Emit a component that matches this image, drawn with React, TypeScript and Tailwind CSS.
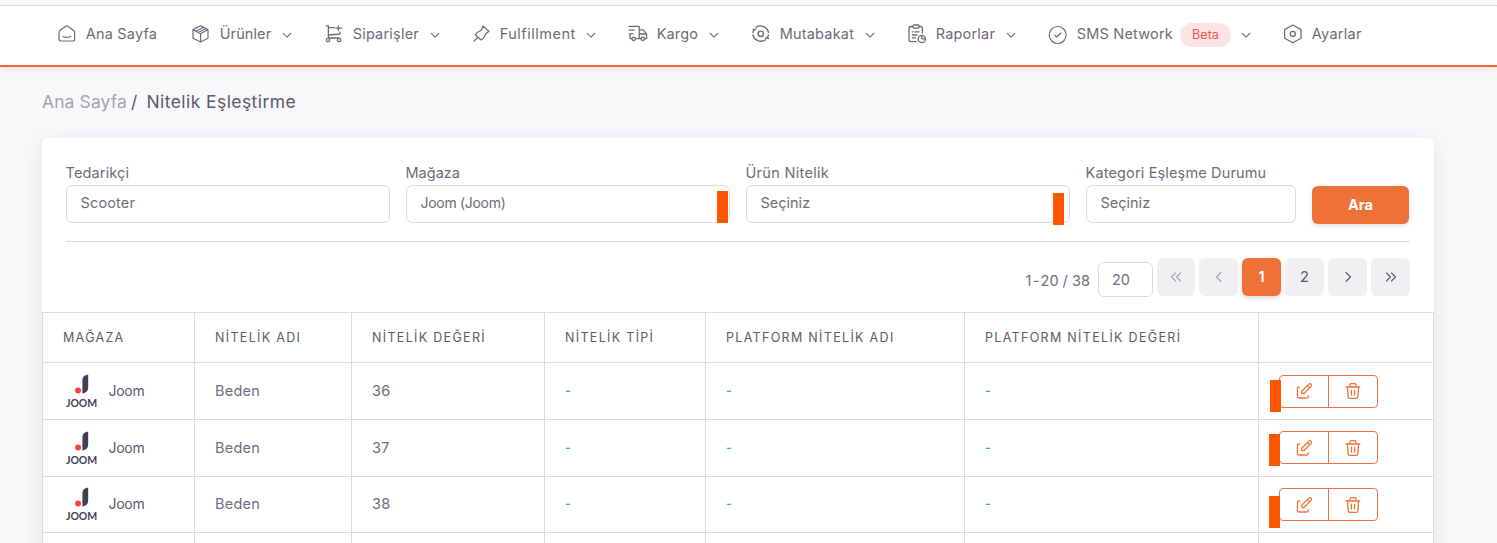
import React from "react";

type IconProps = { className?: string };

const Svg = ({ children, className = "", sw = 1.5 }: { children: React.ReactNode; className?: string; sw?: number }) => (
  <svg viewBox="0 0 20 20" className={`h-5 w-5 shrink-0 ${className}`} fill="none" stroke="currentColor" strokeWidth={sw} strokeLinecap="round" strokeLinejoin="round">
    {children}
  </svg>
);

const HomeIcon = () => (
  <Svg sw={1.2}>
    <path d="M2 8.2 C2 7.4 2.3 6.8 2.9 6.4 L8.5 2.4 C9.3 1.8 10.3 1.8 11.1 2.4 L16.7 6.4 C17.3 6.8 17.6 7.4 17.6 8.2 V15 C17.6 16.3 16.8 17 15.6 17 H4 C2.8 17 2 16.3 2 15 Z" />
    <path d="M6 12.4 C8 13.8 11.6 13.8 13.6 12.4" />
  </Svg>
);
const BoxIcon = () => (
  <Svg sw={1.2}>
    <path d="M9.6 1.8 L17 5.6 V14.2 L9.6 18 L2 14.2 V5.6 Z M2 5.6 L9.6 9.8 L17 5.6 M9.6 9.8 V18 M5 7.2 L12.4 3.2 M7.4 8.6 L14.8 4.5" />
  </Svg>
);
const CartIcon = () => (
  <Svg sw={1.3}>
    <path d="M2 1.8 H4.4 V14 M4.4 3.6 H10.4 M4.4 11 L16 10 V8.2 M14.4 1.8 V6.6 M12 4.2 H17.8 M4.4 14 H15" />
    <circle cx="4" cy="16" r="1.7" />
    <circle cx="15.2" cy="16" r="1.7" />
  </Svg>
);
const PinIcon = () => (
  <Svg sw={1.2}>
    <path d="M12 2 L18 7.2 L15 9.5 L12.8 13.8 L10 16 L4.3 10.8 L6.5 8.2 L10.4 6.2 Z M7 13.3 L3 17" />
  </Svg>
);
const TruckIcon = () => (
  <Svg sw={1.3}>
    <path d="M1 2.4 H11.2 V14.6 H8 M11.2 5.8 H15.2 L18.6 9.8 V14.6 H16.8 M11.2 10 H18.4 M1.2 6.2 H6 M1.2 9.8 H5 M2 9.8 V14.6 H3.4 M8 14.6 H13" />
    <circle cx="5.6" cy="14.8" r="1.7" />
    <circle cx="14.8" cy="14.8" r="1.7" />
  </Svg>
);
const SyncIcon = () => (
  <Svg sw={1.4}>
    <path d="M5.3 3.2 A8 8 0 0 1 17.4 8.2 M14.1 16 A8 8 0 0 1 2 11 M2 8.5 A8 8 0 0 1 3 6 M17.4 11.2 A8 8 0 0 1 16.2 13.8 M2.2 5.4 L3.4 6.1 L4.6 5 M17.4 14.4 L16 13.6 L14.8 14.8" />
    <circle cx="9.8" cy="9.8" r="2.7" />
  </Svg>
);
const ReportIcon = () => (
  <Svg sw={1.3}>
    <path d="M6 2.5 H4 Q2 2.5 2 4.5 V15.5 Q2 17.6 4 17.6 H9 M12 2.5 H13.5 Q15.4 2.5 15.4 4.5 V9 M6 2.2 Q6 1 7.2 1 H11 Q12.2 1 12.2 2.2 Q12.2 4.2 10.4 4.2 H7.8 Q6 4.2 6 2.2 M5.2 7.8 H6 M8 7.8 H12 M5.2 11 H10 M5.2 13.8 H8.6" />
    <circle cx="14.8" cy="14.9" r="3.6" />
    <path d="M14.8 11.5 V14.9 H18.2" />
  </Svg>
);
const CheckIcon = () => (
  <Svg sw={1.2} className="relative top-px">
    <circle cx="9.7" cy="10" r="8.5" />
    <path d="M6.8 10.2 L8.8 12 L12.8 8" />
  </Svg>
);
const HexIcon = () => (
  <Svg sw={1.3}>
    <path d="M9.8 1 L18 5.6 V14.2 L9.8 18.8 L1.6 14.2 V5.6 Z" />
    <circle cx="9.8" cy="9.9" r="2.5" />
  </Svg>
);
const Chevron = ({ className = "" }: IconProps) => (
  <svg viewBox="0 0 10 7" className={`h-[7px] w-[10px] shrink-0 ${className}`} fill="none" stroke="currentColor" strokeWidth="1.15" strokeLinecap="round" strokeLinejoin="round">
    <path d="M1.2 1.4 L5 5.2 L8.8 1.4" />
  </svg>
);

const nav = [
  { icon: <HomeIcon />, label: "Ana Sayfa", w: "w-[134px]", t: "w-[72px] tracking-[0.2px]" },
  { icon: <BoxIcon />, label: "Ürünler", w: "w-[133px]", t: "w-[52px] tracking-[0.1px]", menu: true },
  { icon: <CartIcon />, label: "Siparişler", w: "w-[147px]", t: "w-[67px] tracking-[0.2px]", menu: true },
  { icon: <PinIcon />, label: "Fulfillment", w: "w-[157px]", t: "w-[76px] tracking-[0.5px]", menu: true },
  { icon: <TruckIcon />, label: "Kargo", w: "w-[123px]", t: "w-[42px] tracking-[0.15px]", menu: true },
  { icon: <SyncIcon />, label: "Mutabakat", w: "w-[156px]", t: "w-[75px] tracking-[0.2px]", menu: true },
  { icon: <ReportIcon />, label: "Raporlar", w: "w-[141px]", t: "w-[60px] tracking-[0.2px]", menu: true },
  { icon: <CheckIcon />, label: "SMS Network", w: "w-[235px]", t: "w-[96px] tracking-[0.2px]", menu: true, badge: "Beta" },
  { icon: <HexIcon />, label: "Ayarlar", w: "w-[90px]", t: "w-[51px] tracking-[0.3px]" },
];

const NavBar = () => (
  <header className="mt-[5px] flex h-[62px] border-t border-b-2 border-t-[#dbdade] border-b-[#e9692c] bg-white pl-[57px] pb-[3px] shadow-[0_2px_6px_rgba(75,70,92,0.12)]">
    {nav.map((n) => (
      <a key={n.label} className={`flex shrink-0 items-center whitespace-nowrap ${n.w}`}>
        {n.icon}
        <span className={`ml-[8.7px] mr-[0.3px] shrink-0 ${n.t}`}>{n.label}</span>
        {n.badge && <span className="relative top-px ml-[7px] flex h-6 w-[51px] items-center justify-center rounded-full bg-[#fce4e4] text-[12.5px] tracking-[0.05px] text-[#ea5455]">{n.badge}</span>}
        {n.menu && <Chevron className="relative top-px ml-[10.5px]" />}
      </a>
    ))}
  </header>
);

const Marker = ({ className }: { className: string }) => <span className={`absolute h-8 w-[11px] bg-[#ff5500] ${className}`} />;

const Field = ({ label, value, w, marker, labelTrack = "", valueTrack = "" }: { label: string; value: string; w: string; marker?: string; labelTrack?: string; valueTrack?: string }) => (
  <div className={w}>
    <label className={`-ml-[0.5px] block h-[22px] whitespace-nowrap leading-[20px] ${labelTrack}`}>{label}</label>
    <div className="relative h-[38px] rounded-md border border-[#dbdade] pl-[13.5px] leading-[34px]">
      <span className={valueTrack}>{value}</span>
      {marker && <Marker className={marker} />}
    </div>
  </div>
);

const PageButton = ({ children, tone = "text-[#5d596c]" }: { children: React.ReactNode; tone?: string }) => (
  <span className={`flex h-[38px] w-[39px] items-center justify-center rounded-md bg-[#f0f0f2] ${tone}`}>{children}</span>
);
const Arrows = ({ d }: { d: string }) => (
  <svg viewBox="0 0 14 14" className="h-3.5 w-3.5" fill="none" stroke="currentColor" strokeWidth="1.15" strokeLinecap="round" strokeLinejoin="round">
    <path d={d} />
  </svg>
);

const JoomLogo = () => (
  <div className="-ml-[0.5px] flex w-[38px] flex-col items-center">
    <svg viewBox="0 0 16 20" className="h-5 w-4">
      <path d="M8.4 6.4 Q8.4 1.4 14.2 0.6 V13 Q14.2 18.8 8.4 19.4 Z" fill="#3f3f58" />
      <circle cx="4.1" cy="16.4" r="3" fill="#fb4343" />
    </svg>
    <span className="mt-1 -mb-px font-['Lato'] text-[10.5px] leading-[11px] font-bold tracking-[-0.1px] text-[#3f3f58]">JOOM</span>
  </div>
);

const EditIcon = () => (
  <svg viewBox="0 0 18 18" className="h-[18px] w-[18px]" fill="none" stroke="currentColor" strokeWidth="1.3" strokeLinecap="round" strokeLinejoin="round">
    <path d="M4.6 5 H3.8 Q2.4 5 2.4 6.4 V14.6 Q2.4 16 3.8 16 H11.8 Q13.2 16 13.2 14.6 V13.6" />
    <path d="M6.7 9.2 L13.8 2.1 Q15 1.2 16 2.2 Q17 3.3 16.1 4.4 L9 11.5 H6.7 Z M12.4 3.6 L14.6 5.8" />
  </svg>
);
const TrashIcon = () => (
  <svg viewBox="0 0 18 18" className="h-[18px] w-[18px]" fill="none" stroke="currentColor" strokeWidth="1.3" strokeLinecap="round" strokeLinejoin="round">
    <path d="M2.2 5 H15.8 M3.4 5 L4.2 15 Q4.3 16.4 5.6 16.4 H12.4 Q13.7 16.4 13.8 15 L14.6 5 M6 5 V2.8 Q6 1.6 7.2 1.6 H10.8 Q12 1.6 12 2.8 V5 M7.4 8.4 V13 M10.6 8.4 V13" />
  </svg>
);

const cols = "grid grid-cols-[152px_157px_193px_161px_259px_294px_175px] border-t border-[#dbdade]";
const cell = "flex items-center border-l border-[#dbdade] pl-5 whitespace-nowrap";

const heads = ["MAĞAZA", "NİTELİK ADI", "NİTELİK DEĞERİ", "NİTELİK TİPİ", "PLATFORM NİTELİK ADI", "PLATFORM NİTELİK DEĞERİ", ""];
const rows = [
  { size: "36", h: "h-[57px]", pad: "", marker: "left-[-10px] top-[4px]", nudge: "" },
  { size: "37", h: "h-[57px]", pad: "", marker: "left-[-11px] top-[2px]", nudge: "-mt-px" },
  { size: "38", h: "h-[56px]", pad: "pb-px", marker: "left-[-11px] top-[7px]", nudge: "" },
];

const Table = () => (
  <div className="border-r border-[#dbdade]">
    <div className={`${cols} h-[50px] text-[12.5px] tracking-[1.32px] text-[#5d596c]`}>
      {heads.map((h, i) => (
        <div key={i} className={`${cell} pt-px`}>{h}</div>
      ))}
    </div>
    {rows.map((r) => (
      <div key={r.size} className={`${cols} ${r.h}`}>
        <div className={`${cell} ${r.pad} text-[#5d596c]`}>
          <JoomLogo />
          <span className="ml-2 pb-px text-[14px] tracking-[-0.3px]">Joom</span>
        </div>
        <div className={`${cell} ${r.pad} tracking-[0.25px]`}>Beden</div>
        <div className={`${cell} ${r.pad} tracking-[0.2px]`}>{r.size}</div>
        {[0, 1, 2].map((i) => (
          <div key={i} className={`${cell} ${r.pad} text-[12.5px] font-semibold text-[#28c76f]`}>-</div>
        ))}
        <div className={cell}>
          <div className={`relative flex h-[33px] w-[99px] rounded-[4px] border border-[#ee7237] text-[#ee7237] ${r.nudge}`}>
            <span className="flex w-[49px] items-center justify-center border-r border-[#ee7237]"><EditIcon /></span>
            <span className="flex flex-1 items-center justify-center"><TrashIcon /></span>
            <Marker className={r.marker} />
          </div>
        </div>
      </div>
    ))}
    <div className={`${cols} h-[57px]`}>
      {heads.map((_, i) => (
        <div key={i} className={cell} />
      ))}
    </div>
  </div>
);

export default function App() {
  return (
    <div className="flex h-[543px] w-[1497px] flex-col overflow-hidden bg-[#f8f7fa] font-['Inter',sans-serif] text-[14.5px] text-[#6f6b7d]">
      <div className="shrink-0 bg-white"><NavBar /></div>
      <div className="mt-[23px] ml-[42px] flex h-6 shrink-0 items-center text-[17.5px] whitespace-nowrap">
        <span className="w-[89px] tracking-[0.1px] text-[#a5a3ae]">Ana Sayfa</span>
        <span className="w-[15.5px] text-[#5d596c]">/</span>
        <span className="tracking-[0.42px] text-[#5d596c]">Nitelik Eşleştirme</span>
      </div>
      <main className="mt-6 ml-[42px] w-[1392px] shrink-0 rounded-t-md bg-white shadow-[0_4px_18px_rgba(75,70,92,0.1)]">
        <div className="mx-6 flex h-[104px] gap-4 border-b border-[#dbdade] pt-[25px]">
          <Field label="Tedarikçi" value="Scooter" w="w-[324px]" labelTrack="tracking-[0.15px]" valueTrack="tracking-[0.15px]" />
          <Field label="Mağaza" value="Joom (Joom)" w="w-[324px]" valueTrack="text-[14px] tracking-[-0.3px]" marker="left-[310px] top-[5px]" />
          <Field label="Ürün Nitelik" value="Seçiniz" w="w-[324px]" labelTrack="tracking-[0.3px]" marker="left-[306px] top-[7px]" />
          <Field label="Kategori Eşleşme Durumu" value="Seçiniz" w="w-[210px]" labelTrack="tracking-[0.15px]" />
          <button className="mt-[23px] h-[38px] w-[97px] rounded-md bg-[#ee7237] font-bold text-white shadow-[0_2px_4px_rgba(165,163,174,0.3)]">Ara</button>
        </div>
        <div className="mr-6 flex h-[70px] justify-end gap-1 pt-4">
          <span className="mt-[12px] mr-1 flex whitespace-nowrap">
            <span className="w-[7.5px]">1</span>
            <span className="w-[7.5px]">-</span>
            <span className="w-[22px]">20</span>
            <span className="w-[9.5px]">/</span>
            <span>38</span>
          </span>
          <span className="mt-1 h-[35px] w-[55px] rounded-md border border-[#dbdade] pl-[13px] leading-[34px]">20</span>
          <span className="flex h-[38px] w-[38px] items-center justify-center rounded-md bg-[#f0f0f2] text-[#a5a3ae]"><Arrows d="M6.5 3 L2.5 7 L6.5 11 M11.5 3 L7.5 7 L11.5 11" /></span>
          <PageButton tone="text-[#a5a3ae]"><Arrows d="M9 2.5 L4.5 7 L9 11.5" /></PageButton>
          <span className="flex h-[38px] w-[39px] items-center justify-center rounded-md bg-[#ee7237] font-semibold text-white shadow-[0_2px_4px_rgba(165,163,174,0.4)]">1</span>
          <PageButton>2</PageButton>
          <PageButton><Arrows d="M5 2.5 L9.5 7 L5 11.5" /></PageButton>
          <PageButton><Arrows d="M2.5 3 L6.5 7 L2.5 11 M7.5 3 L11.5 7 L7.5 11" /></PageButton>
        </div>
        <Table />
      </main>
    </div>
  );
}
